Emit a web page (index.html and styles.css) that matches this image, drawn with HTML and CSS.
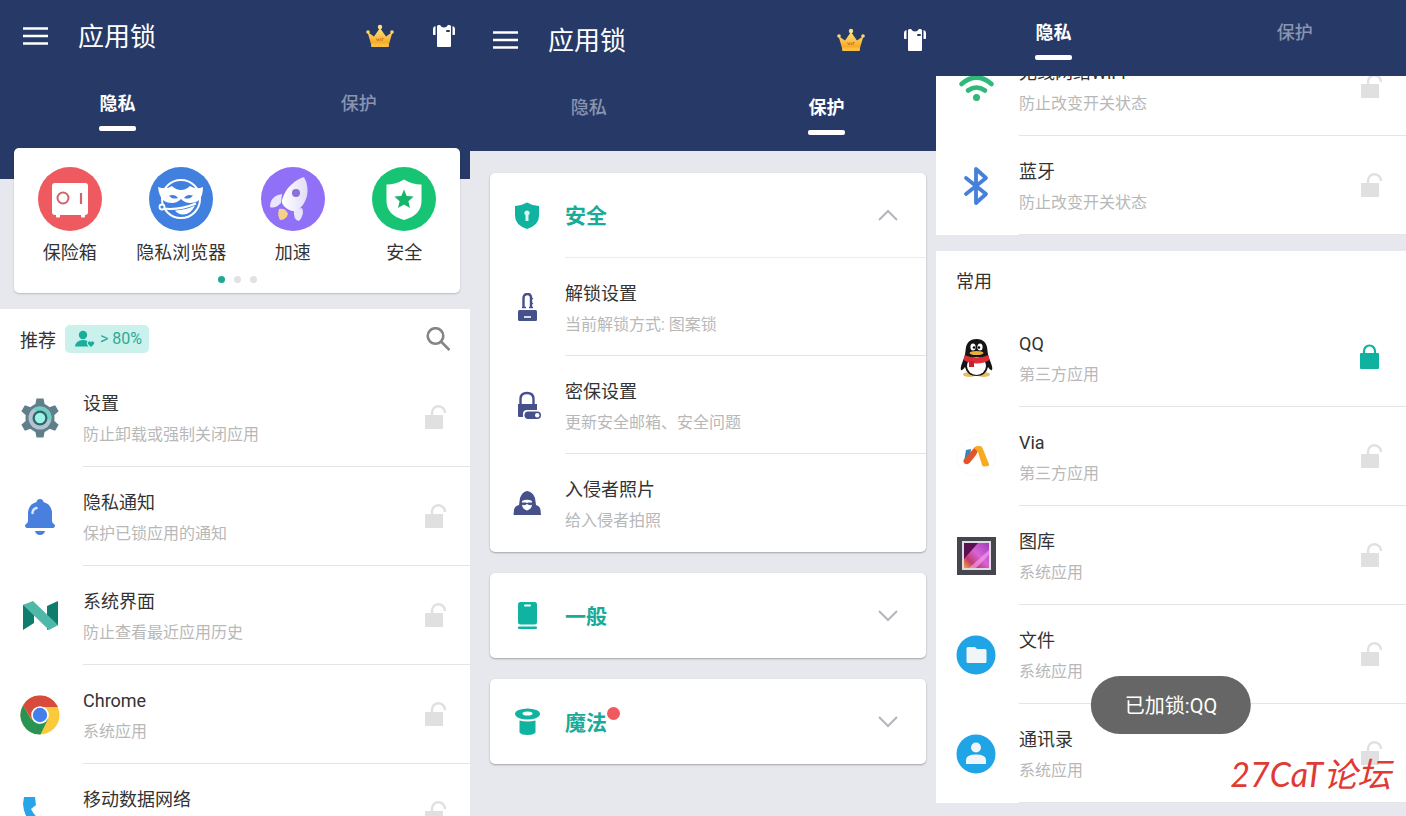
FILE: index.html
```
<!DOCTYPE html>
<html lang="zh-CN">
<head>
    <meta charset="UTF-8">
    <meta name="viewport" content="width=device-width, initial-scale=1">
    <title>应用锁</title>
    <link rel="stylesheet" href="styles.css">
</head>
<body>
<!-- 公用图标 -->
<svg class="sprite" aria-hidden="true">
    <defs>
        <linearGradient id="gold" x1="0" y1="0" x2="0" y2="1">
            <stop offset="0" stop-color="#ffe27a"/>
            <stop offset="1" stop-color="#f6a623"/>
        </linearGradient>
        <linearGradient id="rocketBody" x1="0" y1="0" x2="1" y2="0">
            <stop offset="0" stop-color="#ffffff"/>
            <stop offset="1" stop-color="#e2dcf8"/>
        </linearGradient>
        <linearGradient id="photo" x1="0" y1="1" x2="1" y2="0">
            <stop offset="0" stop-color="#f7a73a"/>
            <stop offset="0.25" stop-color="#c23a6c"/>
            <stop offset="0.55" stop-color="#d964d8"/>
            <stop offset="1" stop-color="#a03cb4"/>
        </linearGradient>
    </defs>
    <symbol id="menu" viewBox="0 0 25 20">
        <path d="M0 2.500h25M0 10h25M0 17.500h25" stroke="#fff" stroke-width="2.600"/>
    </symbol>
    <symbol id="crown" viewBox="0 0 28 24">
        <path d="M1.500 8l6.500 4.500L14 4l6 8.500L26.500 8l-3.500 12H5z" fill="url(#gold)"/>
        <rect x="5" y="19.500" width="18" height="3.500" rx="1" fill="#f9bf3f"/>
        <circle cx="2" cy="8" r="1.800" fill="#ffd968"/>
        <circle cx="14" cy="3" r="2.200" fill="#ffe08a"/>
        <circle cx="26" cy="8" r="1.800" fill="#ffd968"/>
        <path d="M10.500 14.500l1.200 2.500 1.200-2.500M14.200 14.500v2.500M16 17v-2.500h1.600" stroke="#b5651d" stroke-width=".8" fill="none"/>
    </symbol>
    <symbol id="shirt" viewBox="0 0 24 24">
        <path d="M5 2.500Q5 1 6.500 1H8q1.500 2.500 4 2.500T16 1h1.500Q19 1 19 2.500V22q0 1-1 1H6q-1 0-1-1z" fill="#fff"/>
        <path d="M3.500 2v9H1.800Q1 11 1 10V5q0-2.500 2.500-3zM20.500 2v9h1.700q.8 0 .8-1V5q0-2.500-2.500-3z" fill="#fff"/>
        <rect x="14" y="6" width="4" height="2" rx="1" fill="#273a67"/>
    </symbol>
    <symbol id="unlocked" viewBox="0 0 24 26">
        <rect x="1" y="11" width="18" height="14" fill="#e0e0e0"/>
        <path d="M8 12V8.500a6.500 6.500 0 0 1 13 .5" fill="none" stroke="#e0e0e0" stroke-width="2.400"/>
    </symbol>
    <symbol id="locked" viewBox="0 0 24 26">
        <rect x="0" y="9" width="19" height="16" rx="1" fill="#0fb29e"/>
        <path d="M4 10V7a5.500 5.500 0 0 1 11 0v3" fill="none" stroke="#0fb29e" stroke-width="2.200"/>
    </symbol>
    <symbol id="up" viewBox="0 0 20 12">
        <path d="M1 11l9-9 9 9" fill="none" stroke="#b4b5bb" stroke-width="2"/>
    </symbol>
    <symbol id="down" viewBox="0 0 20 12">
        <path d="M1 1l9 9 9-9" fill="none" stroke="#b4b5bb" stroke-width="2"/>
    </symbol>
</svg>

<main class="phones">
    <!-- 隐私 -->
    <section class="phone">
        <header class="top top-tall">
            <div class="app-bar">
                <button class="icon-btn" aria-label="菜单"><svg width="25" height="20"><use href="#menu"/></svg></button>
                <h1>应用锁</h1>
                <button class="icon-btn crown" aria-label="会员"><svg width="28" height="24"><use href="#crown"/></svg></button>
                <button class="icon-btn" aria-label="主题"><svg width="24" height="24"><use href="#shirt"/></svg></button>
            </div>
            <nav class="tabs">
                <button class="tab active">隐私</button>
                <button class="tab">保护</button>
            </nav>
        </header>

        <div class="tools">
            <div class="tool-grid">
                <a class="tool" href="#safe">
                    <svg width="64" height="64" viewBox="0 0 64 64">
                        <circle cx="32" cy="32" r="32" fill="#ee5a60"/>
                        <path d="M17 16h30q3 0 3 3v26q0 3-3 3v1.500q0 1-1 1h-2q-1 0-1-1V48H22v1.500q0 1-1 1h-2q-1 0-1-1V48h-1q-3 0-3-3V19q0-3 3-3z" fill="#fff"/>
                        <circle cx="25" cy="31" r="5.500" fill="none" stroke="#cf6468" stroke-width="2"/>
                        <path d="M43 26v11" stroke="#cf6468" stroke-width="2.200"/>
                    </svg>
                    保险箱
                </a>
                <a class="tool" href="#browser">
                    <svg width="64" height="64" viewBox="0 0 64 64">
                        <circle cx="32" cy="32" r="32" fill="#4180df"/>
                        <circle cx="32" cy="32" r="19" fill="none" stroke="#fff" stroke-width="2"/>
                        <path d="M9 20q8 3 14-1 4 4 9 4t9-4q6 4 13 1 0 9-4 13-3 3-9 3-5 0-9-4-4 4-9 4-6 0-9-3-4-4-5-13z" fill="#fff"/>
                        <path d="M20 28.500q6-2 9 2.500-6 2-9-2.500zM44 28.500q-6-2-9 2.500 6 2 9-2.500z" fill="#4180df"/>
                        <path d="M26 43.500q11-.5 20-5-4 9-12 9-5 0-8-4z" fill="#fff"/>
                        <path d="M14 41.500q16 2 33-5" fill="none" stroke="#fff" stroke-width="2"/>
                        <circle cx="13" cy="40" r="2.500" fill="#4180df" stroke="#fff" stroke-width="1.800"/>
                    </svg>
                    隐私浏览器
                </a>
                <a class="tool" href="#boost">
                    <svg width="64" height="64" viewBox="0 0 64 64">
                        <circle cx="32" cy="32" r="32" fill="#9170f8"/>
                        <path d="M21 27q-12 2-12 13 5 2 11-4zM41 41q3 6-3 13-6-1-5-11z" fill="#eae5fc"/>
                        <path d="M18 42q7-1 9 5-2 6-8 6-3-5-1-11z" fill="#f6d08a"/>
                        <path d="M43 10q5 9 3 19-3 11-11 15-4 1-10-3-5-4-4-8 3-10 9-15 6-6 13-8z" fill="url(#rocketBody)"/>
                        <circle cx="35" cy="26" r="4" fill="#8a70d8"/>
                    </svg>
                    加速
                </a>
                <a class="tool" href="#security">
                    <svg width="64" height="64" viewBox="0 0 64 64">
                        <circle cx="32" cy="32" r="32" fill="#17c473"/>
                        <path d="M32 12.500q8 5 17.500 5V34q0 14-17.500 19Q14.500 48 14.500 34V17.500q9.500 0 17.500-5z" fill="#fff"/>
                        <path d="M32 22.500l2.700 6.500 7 .6-5.300 4.600 1.600 6.800-6-3.600-6 3.600 1.600-6.800-5.300-4.600 7-.6z" fill="#17b56c"/>
                    </svg>
                    安全
                </a>
            </div>
            <div class="dots"><i class="on"></i><i></i><i></i></div>
        </div>

        <div class="panel">
            <div class="panel-head">
                <h2>推荐</h2>
                <span class="share">
                    <svg width="20" height="18" viewBox="0 0 20 18">
                        <circle cx="8" cy="5" r="4.200" fill="#17ae9b"/>
                        <path d="M0 16.500q1-6.500 8-6.500 2.500 0 4.500 1-1.800 2.500 1 5.500z" fill="#17ae9b"/>
                        <path d="M16 17l-3-3q-1-2 1-2.600 1.200-.2 2 .8.800-1 2-.8 2 .6 1 2.600z" fill="#17ae9b"/>
                    </svg>
                    &gt; 80%
                </span>
                <button class="icon-btn search" aria-label="搜索">
                    <svg width="24" height="24" viewBox="0 0 24 24" fill="none" stroke="#858585" stroke-width="2.600">
                        <circle cx="9.500" cy="9" r="7.800"/>
                        <path d="M15 14.500l8.500 8.500"/>
                    </svg>
                </button>
            </div>
            <ul class="rows">
                <li class="row">
                    <svg width="40" height="40" viewBox="0 0 40 40">
                        <g fill="#5f7f8a">
                            <circle cx="20" cy="20" r="14.500"/>
                            <path id="tooth" d="M15 8l1.500-7.500h7L25 8v24l-1.500 7.500h-7L15 32z"/>
                            <use href="#tooth" transform="rotate(60 20 20)"/>
                            <use href="#tooth" transform="rotate(120 20 20)"/>
                        </g>
                        <circle cx="20" cy="20" r="11.500" fill="#b4c3cd"/>
                        <path d="M13 11a11.500 11.500 0 0 1 18 12l-7-5z" fill="#6fd0c2"/>
                        <circle cx="20" cy="20" r="7.500" fill="#2f6670"/>
                        <circle cx="20" cy="20" r="5.200" fill="#9df3e4"/>
                    </svg>
                    <div class="row-body">
                        <div class="row-text"><h3>设置</h3><p>防止卸载或强制关闭应用</p></div>
                        <button class="icon-btn" aria-label="锁定 设置"><svg width="24" height="26"><use href="#unlocked"/></svg></button>
                    </div>
                </li>
                <li class="row">
                    <svg width="40" height="40" viewBox="0 0 40 40">
                        <path d="M20 2q3 0 3.500 3Q31 7 32 15v9q0 2 3 4 0 3-2 3H7q-2 0-2-3 3-2 3-4v-9Q9 7 16.500 5 17 2 20 2z" fill="#4a80dd"/>
                        <path d="M15 34h10q-1 4-5 4t-5-4z" fill="#4a80dd"/>
                        <path d="M12.500 16q0-4 4-5" fill="none" stroke="#d8e6ff" stroke-width="2.500" stroke-linecap="round"/>
                    </svg>
                    <div class="row-body">
                        <div class="row-text"><h3>隐私通知</h3><p>保护已锁应用的通知</p></div>
                        <button class="icon-btn" aria-label="锁定 隐私通知"><svg width="24" height="26"><use href="#unlocked"/></svg></button>
                    </div>
                </li>
                <li class="row">
                    <svg width="40" height="40" viewBox="0 0 40 40">
                        <path d="M3 9l11-3v21L3 34zM27 10l11-5v24l-11 5z" fill="#0e7d6e"/>
                        <path d="M3 9l10-4 25 24-9 5z" fill="#4fb8a9"/>
                    </svg>
                    <div class="row-body">
                        <div class="row-text"><h3>系统界面</h3><p>防止查看最近应用历史</p></div>
                        <button class="icon-btn" aria-label="锁定 系统界面"><svg width="24" height="26"><use href="#unlocked"/></svg></button>
                    </div>
                </li>
                <li class="row">
                    <svg width="40" height="40" viewBox="0 0 40 40">
                        <circle cx="20" cy="20" r="19.500" fill="#fac93c"/>
                        <path d="M3.100 10.250A19.500 19.500 0 0 1 36.900 10.250L38 12H20l-8 13z" fill="#d84a3c"/>
                        <path d="M3.100 10.250A19.500 19.500 0 0 0 20.500 39.500L28 24 19 29l-8-5z" fill="#289352"/>
                        <circle cx="20" cy="20" r="8.800" fill="#fff"/>
                        <circle cx="20" cy="20" r="7.200" fill="#4580ea"/>
                    </svg>
                    <div class="row-body">
                        <div class="row-text"><h3>Chrome</h3><p>系统应用</p></div>
                        <button class="icon-btn" aria-label="锁定 Chrome"><svg width="24" height="26"><use href="#unlocked"/></svg></button>
                    </div>
                </li>
                <li class="row">
                    <svg width="40" height="40" viewBox="0 0 40 40">
                        <path d="M4 3h11l1 8-5 4q4 8 12 13l5-5 8 1v11q-6 3-15 0Q4 28 3 10z" fill="#27a5e8"/>
                    </svg>
                    <div class="row-body">
                        <div class="row-text"><h3>移动数据网络</h3><p>防止改变开关状态</p></div>
                        <button class="icon-btn" aria-label="锁定 移动数据网络"><svg width="24" height="26"><use href="#unlocked"/></svg></button>
                    </div>
                </li>
            </ul>
        </div>
    </section>

    <!-- 保护 -->
    <section class="phone phone-protect">
        <header class="top">
            <div class="app-bar">
                <button class="icon-btn" aria-label="菜单"><svg width="25" height="20"><use href="#menu"/></svg></button>
                <h1>应用锁</h1>
                <button class="icon-btn crown" aria-label="会员"><svg width="28" height="24"><use href="#crown"/></svg></button>
                <button class="icon-btn" aria-label="主题"><svg width="24" height="24"><use href="#shirt"/></svg></button>
            </div>
            <nav class="tabs">
                <button class="tab">隐私</button>
                <button class="tab active">保护</button>
            </nav>
        </header>

        <div class="groups">
            <div class="group">
                <button class="group-head" aria-expanded="true">
                    <svg width="28" height="28" viewBox="0 0 28 28">
                        <path d="M14 .5q6 3.500 12 3.500v10q0 9-12 13Q2 23 2 14V4q6 0 12-3.500z" fill="#0fb39f"/>
                        <path d="M14 8.500a2.600 2.600 0 0 1 1.500 4.800V19h-3v-5.700A2.600 2.600 0 0 1 14 8.500z" fill="#d8f7f2"/>
                    </svg>
                    <span class="group-title"><span class="name">安全</span><svg width="20" height="12"><use href="#up"/></svg></span>
                </button>
                <ul class="rows">
                    <li class="row">
                        <svg width="28" height="28" viewBox="0 0 28 28">
                            <path d="M10.500 14V5q0-4 4-4 3.500 0 3.500 4v9" fill="none" stroke="#46508a" stroke-width="2.400"/>
                            <path d="M18 4l2.500 1.500-2.500 1.500zM18 9l2.500 1.500-2.500 1.500z" fill="#46508a"/>
                            <path d="M9 14.500h4M16 14.500h4" stroke="#46508a" stroke-width="1.500"/>
                            <rect x="5" y="17" width="19" height="11" rx="1.500" fill="#46508a"/>
                            <path d="M11 24h7" stroke="#fff" stroke-width="1.600"/>
                        </svg>
                        <div class="row-body"><div class="row-text"><h3>解锁设置</h3><p>当前解锁方式: 图案锁</p></div></div>
                    </li>
                    <li class="row">
                        <svg width="28" height="28" viewBox="0 0 28 28">
                            <path d="M7.500 13V8q0-6 6.500-6t6.500 6v5" fill="none" stroke="#46508a" stroke-width="2.400"/>
                            <path d="M5 13h19v6H14q-4 0-4 4v3H6q-1 0-1-1z" fill="#46508a"/>
                            <rect x="11.500" y="20.500" width="16.500" height="7.500" rx="3.700" fill="#46508a"/>
                            <circle cx="24.200" cy="24.300" r="2.200" fill="#fff"/>
                        </svg>
                        <div class="row-body"><div class="row-text"><h3>密保设置</h3><p>更新安全邮箱、安全问题</p></div></div>
                    </li>
                    <li class="row">
                        <svg width="28" height="28" viewBox="0 0 28 28">
                            <path d="M14 2q6 1 8 7l1 7q4 1 4.500 5l.5 5H.5l.5-5q.5-4 5-5l1-7q2-6 7-7z" fill="#46508a"/>
                            <path d="M9 12q5-2.500 10 0v3q0 5-5 6.500-5-1.500-5-6.500z" fill="#fff"/>
                            <path d="M9 13.500h4q1 1 2 0h4v2.300q-3 1-5-.8-2 1.800-5 .8z" fill="#46508a"/>
                        </svg>
                        <div class="row-body"><div class="row-text"><h3>入侵者照片</h3><p>给入侵者拍照</p></div></div>
                    </li>
                </ul>
            </div>
            <div class="group">
                <button class="group-head" aria-expanded="false">
                    <svg width="28" height="28" viewBox="0 0 28 28">
                        <rect x="5" y="0" width="19" height="22.500" rx="2.500" fill="#0fb39f"/>
                        <rect x="11" y="2.500" width="7" height="2" rx="1" fill="#fff"/>
                        <rect x="5" y="24.500" width="19" height="2.500" rx="1" fill="#0fb39f"/>
                    </svg>
                    <span class="group-title"><span class="name">一般</span><svg width="20" height="12"><use href="#down"/></svg></span>
                </button>
            </div>
            <div class="group">
                <button class="group-head" aria-expanded="false">
                    <svg width="28" height="28" viewBox="0 0 28 28">
                        <ellipse cx="14.500" cy="6" rx="12.500" ry="5.500" fill="#0fb39f"/>
                        <ellipse cx="14.500" cy="5.500" rx="5" ry="2" fill="#fff"/>
                        <path d="M6.500 12.500q8 2 16 0v12q-2 2.500-8 2.500t-8-2.500z" fill="#0fb39f"/>
                    </svg>
                    <span class="group-title"><span class="name new">魔法</span><svg width="20" height="12"><use href="#down"/></svg></span>
                </button>
            </div>
        </div>
    </section>

    <!-- 隐私列表滚动后 -->
    <section class="phone phone-scrolled">
        <header class="top">
            <nav class="tabs">
                <button class="tab active">隐私</button>
                <button class="tab">保护</button>
            </nav>
        </header>

        <div class="panel">
            <ul class="rows">
                <li class="row">
                    <svg width="40" height="40" viewBox="0 0 40 40">
                        <g fill="none" stroke="#2fb878" stroke-width="4.600" stroke-linecap="round">
                            <path d="M5.500 17q15-13 30 0"/>
                            <path d="M12 23.500q8.500-6 17 0"/>
                        </g>
                        <circle cx="20.500" cy="30.500" r="3.500" fill="#2fb878"/>
                    </svg>
                    <div class="row-body">
                        <div class="row-text"><h3>无线网络WiFi</h3><p>防止改变开关状态</p></div>
                        <button class="icon-btn" aria-label="锁定 WiFi"><svg width="24" height="26"><use href="#unlocked"/></svg></button>
                    </div>
                </li>
                <li class="row">
                    <svg width="40" height="40" viewBox="0 0 40 40">
                        <path d="M10 12l20 16-10 9V3l10 9-20 16" fill="none" stroke="#4680d8" stroke-width="3.800" stroke-linejoin="round" stroke-linecap="round"/>
                    </svg>
                    <div class="row-body">
                        <div class="row-text"><h3>蓝牙</h3><p>防止改变开关状态</p></div>
                        <button class="icon-btn" aria-label="锁定 蓝牙"><svg width="24" height="26"><use href="#unlocked"/></svg></button>
                    </div>
                </li>
            </ul>
        </div>

        <div class="panel">
            <div class="panel-head"><h2>常用</h2></div>
            <ul class="rows">
                <li class="row">
                    <svg width="40" height="40" viewBox="0 0 40 40">
                        <ellipse cx="13.500" cy="36.500" rx="6.500" ry="2.500" fill="#e9bc62"/>
                        <ellipse cx="27.500" cy="36.500" rx="6.500" ry="2.500" fill="#e9bc62"/>
                        <path d="M20.500 1Q31 1 31.500 13q0 5 3 11 2.500 6 1.500 8-1.500 1-4-3-2 9-11.500 9T9 29q-2.500 4-4 3-1-2 1.500-8 3-6 3-11Q10 1 20.500 1z" fill="#151515"/>
                        <ellipse cx="20.500" cy="28" rx="9.500" ry="9" fill="#fff"/>
                        <path d="M8.500 17q12 5 24 0l1 5q-6 3.500-13 3.500T7.500 22z" fill="#dc2e37"/>
                        <path d="M13 23h5v6h-5z" fill="#c9202b"/>
                        <ellipse cx="17" cy="9" rx="2.600" ry="3.500" fill="#fff"/>
                        <ellipse cx="24" cy="9" rx="2.600" ry="3.500" fill="#fff"/>
                        <circle cx="18" cy="9.500" r="1.200"/>
                        <circle cx="23" cy="9.500" r="1.200"/>
                        <ellipse cx="20.500" cy="15" rx="7" ry="2" fill="#eab13c"/>
                    </svg>
                    <div class="row-body">
                        <div class="row-text"><h3>QQ</h3><p>第三方应用</p></div>
                        <button class="icon-btn" aria-label="解锁 QQ"><svg width="24" height="26"><use href="#locked"/></svg></button>
                    </div>
                </li>
                <li class="row">
                    <svg width="40" height="40" viewBox="0 0 40 40">
                        <circle cx="20" cy="20" r="19" fill="#fff" stroke="#fafafa"/>
                        <path d="M10 13l5-1-1 9-6 4z" fill="#2f86c4"/>
                        <path d="M7.500 23L19 10q2-1 5 0l-4 8-6.500 8q-2 2-5 .5-1.500-1-1-3.500z" fill="#e2542c"/>
                        <path d="M18 11q2-2 4-2h2q2 0 2.500 2L33 27q.5 2-1 2l-4 .5q-1.500 0-2-1.500l-4-13z" fill="#f8ab22"/>
                    </svg>
                    <div class="row-body">
                        <div class="row-text"><h3>Via</h3><p>第三方应用</p></div>
                        <button class="icon-btn" aria-label="锁定 Via"><svg width="24" height="26"><use href="#unlocked"/></svg></button>
                    </div>
                </li>
                <li class="row">
                    <svg width="40" height="40" viewBox="0 0 40 40">
                        <rect x="1" y="1" width="39" height="38" fill="#47454e"/>
                        <rect x="6" y="5" width="29" height="29" fill="#dedbe2"/>
                        <rect x="8" y="7" width="25" height="25" fill="url(#photo)"/>
                        <path d="M8 7h14L8 23z" fill="#5b1150"/>
                        <path d="M13 32L33 14v5L20 32z" fill="#f09bf0" opacity=".7"/>
                    </svg>
                    <div class="row-body">
                        <div class="row-text"><h3>图库</h3><p>系统应用</p></div>
                        <button class="icon-btn" aria-label="锁定 图库"><svg width="24" height="26"><use href="#unlocked"/></svg></button>
                    </div>
                </li>
                <li class="row">
                    <svg width="40" height="40" viewBox="0 0 40 40">
                        <circle cx="20" cy="20" r="19.500" fill="#1fa5e5"/>
                        <path d="M12 12h7l2 2h8q1.500 0 1.500 1.500v11q0 1.500-1.500 1.500H12q-1.500 0-1.500-1.500v-13Q10.500 12 12 12z" fill="#f2f5f7"/>
                    </svg>
                    <div class="row-body">
                        <div class="row-text"><h3>文件</h3><p>系统应用</p></div>
                        <button class="icon-btn" aria-label="锁定 文件"><svg width="24" height="26"><use href="#unlocked"/></svg></button>
                    </div>
                </li>
                <li class="row">
                    <svg width="40" height="40" viewBox="0 0 40 40">
                        <circle cx="20" cy="20" r="19.500" fill="#1fa5e5"/>
                        <circle cx="20" cy="13.500" r="5" fill="#f2f5f7"/>
                        <path d="M10 30v-4q0-5.500 10-5.500T30 26v4z" fill="#f2f5f7"/>
                    </svg>
                    <div class="row-body">
                        <div class="row-text"><h3>通讯录</h3><p>系统应用</p></div>
                        <button class="icon-btn" aria-label="锁定 通讯录"><svg width="24" height="26"><use href="#unlocked"/></svg></button>
                    </div>
                </li>
            </ul>
        </div>

        <div class="toast" role="status">已加锁:QQ</div>
        <div class="watermark">27CaT论坛</div>
    </section>
</main>
</body>
</html>
```

FILE: styles.css
```
* {
    margin: 0;
    padding: 0;
    box-sizing: border-box;
}

body {
    font-family: Roboto, "Noto Sans CJK SC", sans-serif;
    font-size: 18px;
    color: #333;
    background: #e7e8ee;
    overflow: hidden;
}

ul {
    list-style: none;
}

button {
    font: inherit;
    color: inherit;
    background: none;
    border: none;
    cursor: pointer;
}

svg {
    display: block;
    flex: none;
}

.sprite {
    position: absolute;
    width: 0;
    height: 0;
}

.phones {
    display: grid;
    grid-template-columns: 470fr 466fr 470fr;
    height: 100vh;
}

.phone {
    position: relative;
    min-width: 0;
    overflow: hidden;
}

/* 顶栏 */
.top {
    position: relative;
    z-index: 1;
    background: #273a67;
    color: #fff;
}

.top-tall {
    z-index: 0;
    padding-bottom: 32px;
}

.phone-protect .top {
    padding-top: 4px;
}

.phone-scrolled .top {
    padding-top: 1px;
}

.app-bar {
    display: flex;
    align-items: center;
    height: 72px;
    padding: 0 14px 0 23px;
}

.phone-protect .app-bar {
    padding-right: 9px;
}

.app-bar h1 {
    flex: 1;
    margin-left: 30px;
    padding-top: 2px;
    font-size: 26px;
    font-weight: 400;
    line-height: 40px;
}

.crown {
    margin-right: 38px;
}

.tabs {
    display: grid;
    grid-template-columns: repeat(2, 51%);
    height: 75px;
    margin-left: -3px;
}

.phone-protect .tabs {
    margin-left: 0;
}

.tab {
    display: flex;
    flex-direction: column;
    align-items: center;
    gap: 8px;
    padding: 18px 0 16px;
    line-height: 28px;
    font-weight: 500;
    color: #8a94b0;
}

.tab.active {
    font-weight: 700;
    color: #fff;
}

.tab.active::after {
    content: "";
    width: 37px;
    height: 5px;
    border-radius: 2px;
    background: #fff;
}

/* 工具卡片 */
.tools {
    position: relative;
    margin: -31px 10px 16px 14px;
    padding: 19px 0 10px;
    border-radius: 5px;
    background: #fff;
    box-shadow: 0 1px 2px rgba(0, 0, 0, 0.2);
}

.tool-grid {
    display: grid;
    grid-template-columns: repeat(4, 1fr);
}

.tool {
    display: flex;
    flex-direction: column;
    align-items: center;
    gap: 8px;
    line-height: 28px;
    white-space: nowrap;
    text-decoration: none;
    color: #333;
}

.dots {
    display: flex;
    justify-content: center;
    gap: 9px;
    margin-top: 9px;
}

.dots i {
    width: 7px;
    height: 7px;
    border-radius: 50%;
    background: #e2e2e4;
}

.dots .on {
    background: #1da893;
}

/* 应用列表 */
.panel {
    margin-bottom: 16px;
    background: #fff;
}

.phone-scrolled .top + .panel {
    margin-top: -39px;
}

.panel-head {
    display: flex;
    align-items: center;
    height: 59px;
    padding: 0 20px;
}

.phone-scrolled .panel-head {
    height: 57px;
}

.panel-head h2 {
    font-size: 18px;
    font-weight: 400;
}

.share {
    display: flex;
    align-items: center;
    gap: 5px;
    height: 28px;
    margin-left: 9px;
    padding: 0 7px 0 10px;
    border-radius: 5px;
    font-size: 16px;
    color: #2fa897;
    background: #caf1eb;
}

.search {
    margin-left: auto;
}

.row {
    display: flex;
    align-items: center;
    gap: 23px;
    height: 99px;
    padding-left: 20px;
}

.row-body {
    flex: 1;
    display: flex;
    align-items: center;
    height: 100%;
    padding-right: 22px;
    border-bottom: 1px solid #e4e4e4;
}

.row-text {
    flex: 1;
    padding-top: 4px;
}

.row h3 {
    font-size: 18px;
    font-weight: 400;
    line-height: 32px;
}

.row p {
    font-size: 16px;
    line-height: 30px;
    color: #b8b8b8;
}

/* 保护分组 */
.groups {
    display: flex;
    flex-direction: column;
    gap: 21px;
    padding: 22px 10px 22px 20px;
}

.group {
    border-radius: 5px;
    background: #fff;
    box-shadow: 0 1px 2px rgba(0, 0, 0, 0.3);
}

.group-head {
    display: flex;
    align-items: center;
    gap: 24px;
    width: 100%;
    height: 85px;
    padding-left: 23px;
    text-align: left;
}

.group-title {
    flex: 1;
    display: flex;
    align-items: center;
    justify-content: space-between;
    height: 100%;
    padding-right: 28px;
}

.group-head[aria-expanded="true"] .group-title {
    border-bottom: 1px solid #ececec;
}

.name {
    position: relative;
    padding-top: 2px;
    font-size: 21px;
    font-weight: 700;
    line-height: 24px;
    color: #18ab99;
}

.new::after {
    content: "";
    position: absolute;
    top: -2px;
    left: 100%;
    width: 13px;
    height: 13px;
    border-radius: 50%;
    background: #ef5a5f;
}

.group .row {
    gap: 24px;
    height: 98px;
    padding-left: 23px;
}

.group .row:last-child .row-body {
    border-bottom: none;
}

/* 浮层 */
.toast {
    position: absolute;
    left: 50%;
    bottom: 82px;
    z-index: 2;
    transform: translateX(-50%);
    padding: 2px 34px 0;
    border-radius: 29px;
    font-size: 20px;
    line-height: 56px;
    white-space: nowrap;
    color: #fff;
    background: #666;
}

.watermark {
    position: absolute;
    right: 15px;
    bottom: 22px;
    z-index: 2;
    font-family: Lato, "Noto Sans CJK SC", sans-serif;
    font-size: 34px;
    font-style: italic;
    line-height: 40px;
    color: #e03a36;
}
```
